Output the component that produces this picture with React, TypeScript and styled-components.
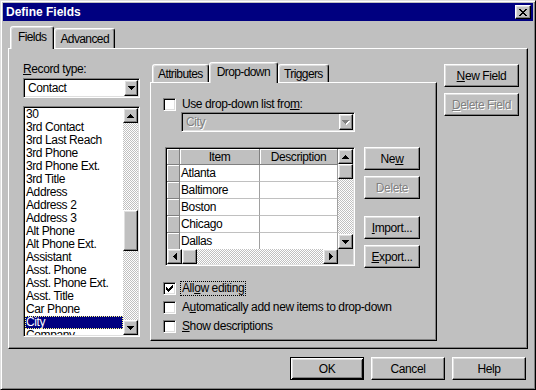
import React from 'react';
import styled, { createGlobalStyle, css } from 'styled-components';

const GlobalStyle = createGlobalStyle`
  html, body { margin: 0; padding: 0; background: #c0c0c0; }
  body {
    font-family: "Liberation Sans", Arial, sans-serif;
    font-size: 12px;
    letter-spacing: -0.4px;
    color: #000;
  }
`;

// classic 3d bevels
const raised = css`
  border: 1px solid;
  border-color: #fff #000 #000 #fff;
  box-shadow: inset -1px -1px #808080, inset 1px 1px #dfdfdf;
`;

const sunken = css`
  border: 1px solid;
  border-color: #808080 #fff #fff #808080;
  box-shadow: inset 1px 1px #000, inset -1px -1px #dfdfdf;
`;

const dither = css`
  background-color: #c0c0c0;
  background-image: conic-gradient(#fff 25%, transparent 0 50%, #fff 0 75%, transparent 0);
  background-size: 2px 2px;
`;

const UP = ['...X...', '..XXX..', '.XXXXX.', 'XXXXXXX'];
const DOWN = [...UP].reverse();
const LEFT = ['...X', '..XX', '.XXX', 'XXXX', '.XXX', '..XX', '...X'];
const RIGHT = LEFT.map((r) => r.split('').reverse().join(''));
const CLOSE = ['XX....XX', '.XX..XX.', '..XXXX..', '...XX...', '..XXXX..', '.XX..XX.', 'XX....XX'];
const CHECK = ['......X', '.....XX', 'X...XXX', 'XX.XXX.', 'XXXXX..', '.XXX...', '..X....'];

const PixelIcon = ({ rows, color = '#000', shadow }: { rows: string[]; color?: string; shadow?: string }) => {
  const cells: React.ReactNode[] = [];
  rows.forEach((r, y) =>
    r.split('').forEach((c, x) => {
      if (c === 'X') cells.push(<rect key={`${x}-${y}`} x={x} y={y} width={1} height={1} />);
    })
  );
  const pad = shadow ? 1 : 0;
  return (
    <svg width={rows[0].length + pad} height={rows.length + pad} shapeRendering="crispEdges">
      {shadow && (
        <g fill={shadow} transform="translate(1 1)">
          {cells}
        </g>
      )}
      <g fill={color}>{cells}</g>
    </svg>
  );
};

const Dialog = styled.div`
  box-sizing: border-box;
  width: 536px;
  height: 390px;
  padding: 2px;
  display: flex;
  flex-direction: column;
  background: #c0c0c0;
  border: 1px solid;
  border-color: #dfdfdf #000 #000 #dfdfdf;
  box-shadow: inset 1px 1px #fff, inset -1px -1px #808080;
`;

const TitleBar = styled.div`
  height: 18px;
  flex: none;
  display: flex;
  align-items: center;
  padding-left: 3px;
  background: #000080;
  color: #fff;
  font-weight: bold;
  letter-spacing: 0;
`;

const TitleText = styled.span`
  flex: 1;
`;

const CloseButton = styled.div`
  box-sizing: border-box;
  width: 16px;
  height: 14px;
  margin-right: 2px;
  display: flex;
  align-items: center;
  justify-content: center;
  background: #c0c0c0;
  ${raised};
`;

const Body = styled.div`
  flex: 1;
  min-height: 0;
  display: flex;
  flex-direction: column;
  padding: 5px 5px 7px 5px;
`;

const TabStrip = styled.div<{ $h: number }>`
  flex: none;
  height: ${(p) => p.$h}px;
  display: flex;
  align-items: flex-end;
  padding-left: 2px;
`;

const Tab = styled.div<{ $active?: boolean }>`
  box-sizing: border-box;
  position: relative;
  z-index: ${(p) => (p.$active ? 2 : 0)};
  height: ${(p) => (p.$active ? 'calc(100% + 1px)' : 'calc(100% - 2px)')};
  margin-bottom: ${(p) => (p.$active ? '-1px' : '0')};
  padding: 0 ${(p) => (p.$active ? '7px 2px' : '5px 0')};
  display: flex;
  align-items: center;
  letter-spacing: -0.6px;
  background: #c0c0c0;
  border: 1px solid;
  border-bottom: none;
  border-color: #fff #000 transparent #fff;
  border-radius: 3px 3px 0 0;
  box-shadow: inset -1px 0 #808080, inset 1px 1px #dfdfdf;
`;

const TabPanel = styled.div`
  box-sizing: border-box;
  flex: 1;
  min-height: 0;
  display: flex;
  background: #c0c0c0;
  border: 1px solid;
  border-color: #fff #000 #000 #fff;
  box-shadow: inset -1px -1px #808080;
`;

const FieldsPanel = styled(TabPanel)`
  padding: 13px 8px 7px 14px;
`;

const LeftColumn = styled.div`
  width: 117px;
  flex: none;
  display: flex;
  flex-direction: column;
  margin-bottom: 4px;
`;

const FieldLabel = styled.div`
  line-height: 13px;
  margin-top: 1px;
`;

const Key = styled.span`
  text-decoration: underline;
`;

const Combo = styled.div<{ $disabled?: boolean }>`
  box-sizing: border-box;
  height: 20px;
  flex: none;
  display: flex;
  align-items: center;
  padding: 1px;
  background: ${(p) => (p.$disabled ? '#c0c0c0' : '#fff')};
  color: ${(p) => (p.$disabled ? '#808080' : '#000')};
  text-shadow: ${(p) => (p.$disabled ? '1px 1px #fff' : 'none')};
  ${sunken};
`;

const RecordCombo = styled(Combo)`
  margin-top: 2px;
`;

const CityCombo = styled(Combo)`
  width: 174px;
  margin: 1px 0 0 18px;
`;

const ComboText = styled.span`
  flex: 1;
  padding-left: 3px;
  line-height: 16px;
`;

const ArrowBox = styled.div`
  box-sizing: border-box;
  flex: none;
  width: 15px;
  height: 15px;
  display: flex;
  align-items: center;
  justify-content: center;
  background: #c0c0c0;
  ${raised};
`;

const ComboButton = styled(ArrowBox)`
  width: 14px;
  height: 16px;
`;

const ListBox = styled.div`
  box-sizing: border-box;
  flex: 1;
  min-height: 0;
  margin-top: 8px;
  display: flex;
  padding: 1px;
  background: #fff;
  ${sunken};
`;

const ListItems = styled.div`
  flex: 1;
  min-width: 0;
  overflow: hidden;
`;

const ListItem = styled.div<{ $selected?: boolean }>`
  box-sizing: border-box;
  height: 13px;
  line-height: 13px;
  padding-left: 1px;
  white-space: nowrap;
  background: ${(p) => (p.$selected ? '#000080' : 'transparent')};
  color: ${(p) => (p.$selected ? '#fff' : '#000')};
  outline: ${(p) => (p.$selected ? '1px dotted #ffff80' : 'none')};
  outline-offset: -1px;
`;

const VScroll = styled.div`
  width: 15px;
  flex: none;
  display: flex;
  flex-direction: column;
`;

const HScroll = styled.div`
  height: 15px;
  display: flex;
`;

const Track = styled.div<{ $horizontal?: boolean }>`
  flex: 1;
  display: flex;
  flex-direction: ${(p) => (p.$horizontal ? 'row' : 'column')};
  ${dither};
`;

const Thumb = styled.div<{ $offset: number; $len: number; $horizontal?: boolean }>`
  box-sizing: border-box;
  flex: none;
  background: #c0c0c0;
  ${raised};
  ${(p) =>
    p.$horizontal
      ? css`
          margin-left: ${p.$offset}px;
          width: ${p.$len}px;
          height: 15px;
        `
      : css`
          margin-top: ${p.$offset}px;
          height: ${p.$len}px;
          width: 15px;
        `}
`;

const InnerTabs = styled.div`
  width: 287px;
  flex: none;
  margin-left: 10px;
  display: flex;
  flex-direction: column;
`;

const DropDownPanel = styled(TabPanel)`
  flex-direction: column;
  padding: 15px 0 0 12px;
`;

const CheckRow = styled.div`
  height: 13px;
  display: flex;
  align-items: center;
  gap: 4px;
`;

const CheckBox = styled.div`
  box-sizing: border-box;
  width: 13px;
  height: 13px;
  flex: none;
  display: flex;
  align-items: center;
  justify-content: center;
  background: #fff;
  ${sunken};
`;

const CheckLabel = styled.span<{ $focus?: boolean }>`
  padding: 0 1px;
  line-height: 13px;
  border: 1px dotted ${(p) => (p.$focus ? '#000' : 'transparent')};
`;

const GridRow = styled.div`
  display: flex;
  align-items: flex-start;
  margin: 15px 0 0 2px;
`;

const GridBox = styled.div`
  box-sizing: border-box;
  width: 190px;
  height: 119px;
  padding: 1px;
  display: grid;
  grid-template-columns: 1fr 15px;
  grid-template-rows: 1fr 15px;
  background: #c0c0c0;
  ${sunken};
`;

const Table = styled.div`
  display: grid;
  grid-template-columns: 13px 80px 78px;
  grid-template-rows: 16px repeat(5, 17px);
  overflow: hidden;
  background: #fff;
`;

const HeadCell = styled.div`
  box-sizing: border-box;
  display: flex;
  align-items: center;
  justify-content: center;
  background: #c0c0c0;
  border-right: 1px solid #808080;
  border-bottom: 1px solid #808080;
  box-shadow: inset 1px 1px #fff;
`;

const DataCell = styled.div`
  box-sizing: border-box;
  padding-left: 1px;
  line-height: 16px;
  white-space: nowrap;
  overflow: hidden;
  border-right: 1px solid #a0a0a0;
  border-bottom: 1px solid #c0c0c0;
`;

const Corner = styled.div`
  background: #c0c0c0;
`;

const ButtonColumn = styled.div<{ $w: number }>`
  width: ${(p) => p.$w}px;
  flex: none;
  display: flex;
  flex-direction: column;
  gap: 6px;
`;

const GridButtons = styled(ButtonColumn)`
  margin-left: 9px;
`;

const SideButtons = styled(ButtonColumn)`
  margin: 2px 0 0 7px;
`;

const Spacer = styled.div<{ $h: number }>`
  height: ${(p) => p.$h}px;
`;

const PushButton = styled.div<{ $default?: boolean; $disabled?: boolean; $w?: number }>`
  box-sizing: border-box;
  width: ${(p) => (p.$w ? `${p.$w}px` : '100%')};
  height: 23px;
  flex: none;
  display: flex;
  align-items: center;
  justify-content: center;
  background: #c0c0c0;
  color: ${(p) => (p.$disabled ? '#808080' : '#000')};
  text-shadow: ${(p) => (p.$disabled ? '1px 1px #fff' : 'none')};
  ${(p) =>
    p.$default
      ? css`
          border: 1px solid #000;
          box-shadow: inset 1px 1px #fff, inset -1px -1px #000, inset 2px 2px #dfdfdf,
            inset -2px -2px #808080;
        `
      : raised};
`;

const CheckList = styled.div`
  display: flex;
  flex-direction: column;
  gap: 6px;
  margin-top: 14px;
`;

const Footer = styled.div`
  flex: none;
  display: flex;
  justify-content: flex-end;
  gap: 7px;
  margin-top: 8px;
  padding-right: 2px;
`;

const fields = [
  '30',
  '3rd Contact',
  '3rd Last Reach',
  '3rd Phone',
  '3rd Phone Ext.',
  '3rd Title',
  'Address',
  'Address 2',
  'Address 3',
  'Alt Phone',
  'Alt Phone Ext.',
  'Assistant',
  'Asst. Phone',
  'Asst. Phone Ext.',
  'Asst. Title',
  'Car Phone',
  'City',
  'Company',
];

const cities = ['Atlanta', 'Baltimore', 'Boston', 'Chicago', 'Dallas'];

const VerticalScrollBar = ({ offset, len }: { offset: number; len: number }) => (
  <VScroll>
    <ArrowBox>
      <PixelIcon rows={UP} />
    </ArrowBox>
    <Track>
      <Thumb $offset={offset} $len={len} />
    </Track>
    <ArrowBox>
      <PixelIcon rows={DOWN} />
    </ArrowBox>
  </VScroll>
);

const HorizontalScrollBar = ({ offset, len }: { offset: number; len: number }) => (
  <HScroll>
    <ArrowBox>
      <PixelIcon rows={LEFT} />
    </ArrowBox>
    <Track $horizontal>
      <Thumb $horizontal $offset={offset} $len={len} />
    </Track>
    <ArrowBox>
      <PixelIcon rows={RIGHT} />
    </ArrowBox>
  </HScroll>
);

export default function App() {
  return (
    <>
      <GlobalStyle />
      <Dialog>
        <TitleBar>
          <TitleText>Define Fields</TitleText>
          <CloseButton>
            <PixelIcon rows={CLOSE} />
          </CloseButton>
        </TitleBar>
        <Body>
          <TabStrip $h={22}>
            <Tab $active>Fields</Tab>
            <Tab>Advanced</Tab>
          </TabStrip>
          <FieldsPanel>
            <LeftColumn>
              <FieldLabel>
                <Key>R</Key>ecord type:
              </FieldLabel>
              <RecordCombo>
                <ComboText>Contact</ComboText>
                <ComboButton>
                  <PixelIcon rows={DOWN} />
                </ComboButton>
              </RecordCombo>
              <ListBox>
                <ListItems>
                  {fields.map((f) => (
                    <ListItem key={f} $selected={f === 'City'}>
                      {f}
                    </ListItem>
                  ))}
                </ListItems>
                <VerticalScrollBar offset={87} len={41} />
              </ListBox>
            </LeftColumn>

            <InnerTabs>
              <TabStrip $h={20}>
                <Tab>Attributes</Tab>
                <Tab $active>Drop-down</Tab>
                <Tab>Triggers</Tab>
              </TabStrip>
              <DropDownPanel>
                <CheckRow>
                  <CheckBox />
                  <CheckLabel>
                    Use drop-down list fro<Key>m</Key>:
                  </CheckLabel>
                </CheckRow>
                <CityCombo $disabled>
                  <ComboText>City</ComboText>
                  <ComboButton>
                    <PixelIcon rows={DOWN} color="#808080" shadow="#fff" />
                  </ComboButton>
                </CityCombo>
                <GridRow>
                  <GridBox>
                    <Table>
                      <HeadCell />
                      <HeadCell>Item</HeadCell>
                      <HeadCell>Description</HeadCell>
                      {cities.map((c) => (
                        <React.Fragment key={c}>
                          <HeadCell />
                          <DataCell>{c}</DataCell>
                          <DataCell />
                        </React.Fragment>
                      ))}
                    </Table>
                    <VerticalScrollBar offset={0} len={15} />
                    <HorizontalScrollBar offset={0} len={15} />
                    <Corner />
                  </GridBox>
                  <GridButtons $w={56}>
                    <PushButton>
                      Ne<Key>w</Key>
                    </PushButton>
                    <PushButton $disabled>Delete</PushButton>
                    <Spacer $h={5} />
                    <PushButton>
                      <Key>I</Key>mport...
                    </PushButton>
                    <PushButton>
                      <Key>E</Key>xport...
                    </PushButton>
                  </GridButtons>
                </GridRow>
                <CheckList>
                  <CheckRow>
                    <CheckBox>
                      <PixelIcon rows={CHECK} />
                    </CheckBox>
                    <CheckLabel $focus>
                      All<Key>o</Key>w editing
                    </CheckLabel>
                  </CheckRow>
                  <CheckRow>
                    <CheckBox />
                    <CheckLabel>
                      A<Key>u</Key>tomatically add new items to drop-down
                    </CheckLabel>
                  </CheckRow>
                  <CheckRow>
                    <CheckBox />
                    <CheckLabel>
                      <Key>S</Key>how descriptions
                    </CheckLabel>
                  </CheckRow>
                </CheckList>
              </DropDownPanel>
            </InnerTabs>

            <SideButtons $w={75}>
              <PushButton>
                <Key>N</Key>ew Field
              </PushButton>
              <PushButton $disabled>
                <Key>D</Key>elete Field
              </PushButton>
            </SideButtons>
          </FieldsPanel>
          <Footer>
            <PushButton $default $w={74}>
              OK
            </PushButton>
            <PushButton $w={74}>Cancel</PushButton>
            <PushButton $w={74}>Help</PushButton>
          </Footer>
        </Body>
      </Dialog>
    </>
  );
}
